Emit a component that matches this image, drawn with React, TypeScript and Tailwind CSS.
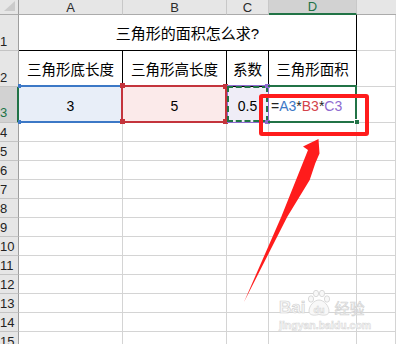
import React from "react";

const lowerRows = [4, 5, 6, 7, 8, 9, 10, 11, 12, 13, 14, 15];

function ColHead({ label, active }: { label: string; active?: boolean }) {
  if (active) {
    return (
      <div className="flex items-center justify-center border-r border-b-2 border-r-[#c8c8c8] border-b-[#217346] bg-[#d2d2d2] text-[13px] leading-none text-[#217346]">
        {label}
      </div>
    );
  }
  return (
    <div className="flex items-center justify-center border-r border-b border-r-[#c8c8c8] border-b-[#ababab] bg-[#e6e6e6] text-[13px] leading-none text-[#2b2b2b]">
      {label}
    </div>
  );
}

function RowHead({ n, active }: { n: number; active?: boolean }) {
  if (active) {
    return (
      <div className="flex items-end border-r-2 border-b border-r-[#217346] border-b-[#c4c4c4] bg-[#d2d2d2] pb-[3px] text-[13px] leading-none text-[#217346]">
        {n}
      </div>
    );
  }
  return (
    <div className="flex items-end border-r border-b border-r-[#9e9e9e] border-b-[#c4c4c4] bg-[#e6e6e6] pb-[2px] text-[13px] leading-none text-[#222]">
      {n}
    </div>
  );
}

function Cell() {
  return <div className="border-r border-b border-[#d4d4d4]" />;
}

function HeadCell({ text }: { text: string }) {
  return (
    <div className="flex items-center justify-center border-r border-b border-black pt-[3px] text-[14.5px] leading-none">
      {text}
    </div>
  );
}

export default function App() {
  return (
    <div className="relative h-[344px] w-[396px] overflow-hidden bg-white font-['Liberation_Sans','Noto_Sans_CJK_SC',sans-serif] text-black">
      <div className="grid grid-cols-[19px_104px_104px_42px_88px_1fr] grid-rows-[15px_36px_36px_36px_repeat(12,19px)]">
        {/* column headers */}
        <div className="border-r border-b border-r-[#9e9e9e] border-b-[#ababab] bg-[#e6e6e6]">
          <svg width="18" height="14" viewBox="0 0 18 14">
            <polygon points="15,1 15,11 4,11" fill="#cbcbcb" />
          </svg>
        </div>
        <ColHead label="A" />
        <ColHead label="B" />
        <ColHead label="C" />
        <ColHead label="D" active />
        <div className="border-b border-b-[#ababab] bg-[#e6e6e6]" />

        {/* row 1 */}
        <RowHead n={1} />
        <div className="col-span-4 flex items-center justify-center border-r border-b border-black pt-[2px] text-[15px] leading-none">
          三角形的面积怎么求?
        </div>
        <Cell />

        {/* row 2 */}
        <RowHead n={2} />
        <HeadCell text="三角形底长度" />
        <HeadCell text="三角形高长度" />
        <HeadCell text="系数" />
        <HeadCell text="三角形面积" />
        <Cell />

        {/* row 3 */}
        <RowHead n={3} active />
        <div className="relative flex items-center justify-center border-r border-b border-[#d4d4d4] bg-[#e8eef8] pt-[3px] text-[14px] leading-none">
          3
          <div className="absolute -top-[2px] -bottom-[1px] left-0 right-0 border-y-2 border-[#3c78c6]" />
          <div className="absolute -left-px -top-[3px] h-[4px] w-[3px] bg-[#3c78c6]" />
          <div className="absolute -left-px -bottom-[2px] h-[4px] w-[3px] bg-[#3c78c6]" />
        </div>
        <div className="relative flex items-center justify-center border-r border-b border-[#d4d4d4] bg-[#fbeaea] pt-[3px] text-[14px] leading-none">
          5
          <div className="absolute -left-[2px] -right-[1px] -top-[2px] -bottom-[1px] border-2 border-[#c4343c]" />
          <div className="absolute -left-[3px] -top-[4px] h-[5px] w-[5px] bg-[#c4343c]" />
          <div className="absolute -left-[3px] -bottom-[2px] h-[5px] w-[5px] bg-[#c4343c]" />
          <div className="absolute -right-[2px] -top-[3px] h-[5px] w-[5px] bg-[#c4343c]" />
          <div className="absolute -right-[2px] -bottom-[2px] h-[5px] w-[5px] bg-[#c4343c]" />
        </div>
        <div className="relative flex items-center justify-center border-r border-b border-[#d4d4d4] bg-[#efedf7] pt-[3px] text-[14px] leading-none">
          0.5
          <div className="absolute -top-[2px] -bottom-px left-0 -right-px border border-[#8e6ad0]" />
          <div className="absolute -top-px bottom-0 left-0 right-0 border-2 border-dashed border-[#217346]" />
          <div className="absolute -right-[2px] -top-[3px] h-[4px] w-[5px] bg-[#8e6ad0]" />
          <div className="absolute -right-[2px] -bottom-[2px] h-[4px] w-[5px] bg-[#8e6ad0]" />
        </div>
        <div className="relative flex items-center border-r border-b border-[#d4d4d4] pl-[2px] pt-[3px] text-[14px] leading-none">
          <span className="text-[#222]">=</span>
          <span className="text-[#3c78c6]">A3</span>
          <span className="text-[#222]">*</span>
          <span className="text-[#d4434a]">B3</span>
          <span className="text-[#222]">*</span>
          <span className="text-[#8e6ad0]">C3</span>
          <div className="absolute -top-[2px] -bottom-px -left-px -right-px border-y-2 border-r-2 border-[#217346]" />
          <div className="absolute -right-[3px] -bottom-[2px] h-[5px] w-[5px] border-l border-t border-white bg-[#217346]" />
        </div>
        <Cell />

        {/* rows 4 - 15 */}
        {lowerRows.map((n) => (
          <React.Fragment key={n}>
            <RowHead n={n} />
            <Cell />
            <Cell />
            <Cell />
            <Cell />
            <Cell />
          </React.Fragment>
        ))}
      </div>

      {/* annotation: red frame around the formula */}
      <div className="pointer-events-none absolute left-[259px] top-[94px] h-[42px] w-[110px] rounded-[3px] border-4 border-[#ff1c1c]" />

      {/* annotation: red arrow */}
      <svg className="pointer-events-none absolute inset-0" width="396" height="344" viewBox="0 0 396 344">
        <polygon
          points="244,302 281.3,216.7 296,180 308,150 303,146.5 318.5,139 319.5,153.5 315.3,163.3 309.7,180 287.3,216.7"
          fill="#ff1c1c"
        />
      </svg>

      {/* watermark */}
      <div className="pointer-events-none absolute left-[279px] top-[289px] flex flex-col items-start">
        <div className="flex items-end">
          <span className="text-[17px] font-bold leading-none text-[#f7f7f7] [-webkit-text-stroke:0.7px_#d2d2d2]">Bai</span>
          <svg width="28" height="28" viewBox="0 0 28 28" className="-mb-[1px]">
            <g fill="#f8f8f8" stroke="#d2d2d2" strokeWidth="0.8">
              <ellipse cx="6" cy="10" rx="2.6" ry="3.2" />
              <ellipse cx="11" cy="4.5" rx="2.6" ry="3.2" />
              <ellipse cx="17" cy="4.5" rx="2.6" ry="3.2" />
              <ellipse cx="22" cy="10" rx="2.6" ry="3.2" />
              <path d="M14 11 C 19 11 24 17 24 22 C 24 26 20 27 14 25.5 C 8 27 4 26 4 22 C 4 17 9 11 14 11 Z" />
            </g>
            <text x="14" y="24" textAnchor="middle" fontSize="9" fontWeight="bold" fill="#f8f8f8" stroke="#d2d2d2" strokeWidth="0.5" fontFamily="Liberation Sans, sans-serif">
              du
            </text>
          </svg>
          <span className="ml-[1px] text-[15px] leading-none text-[#f7f7f7] [-webkit-text-stroke:0.6px_#d2d2d2]">经验</span>
        </div>
        <span className="mt-[4px] text-[10.5px] font-bold leading-none text-[#f7f7f7] [-webkit-text-stroke:0.5px_#d6d6d6]">
          jingyan.baidu.com
        </span>
      </div>
    </div>
  );
}
